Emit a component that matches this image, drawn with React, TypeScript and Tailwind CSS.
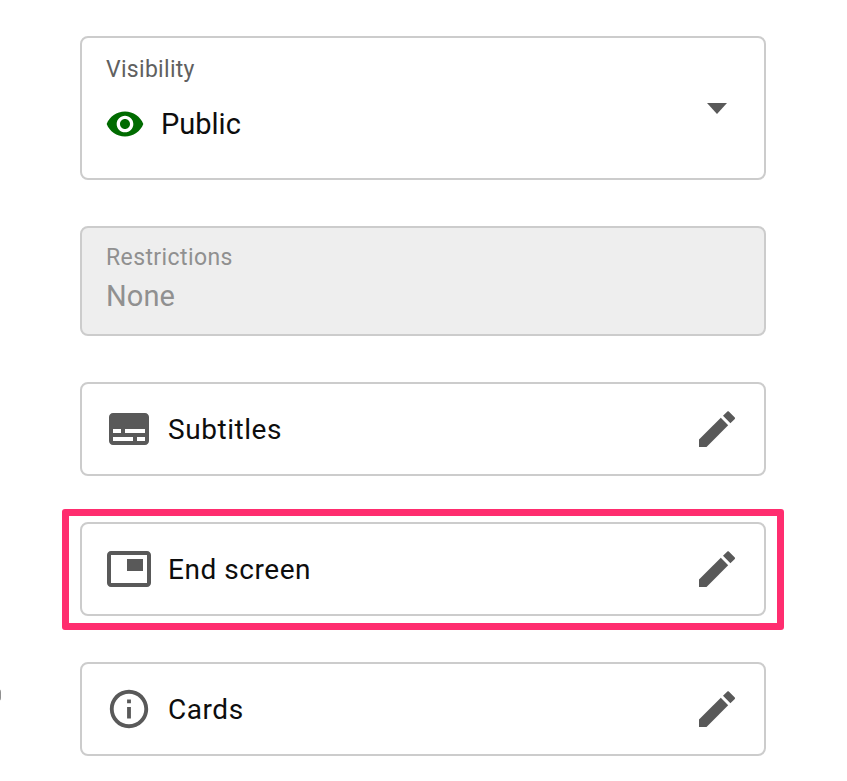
const rowIcons = {
  subtitles:
    "M20 4H4c-1.1 0-2 .9-2 2v12c0 1.1.9 2 2 2h16c1.1 0 2-.9 2-2V6c0-1.1-.9-2-2-2zM4 12h4v2H4v-2zm10 6H4v-2h10v2zm6 0h-4v-2h4v2zm0-4H10v-2h10v2z",
  endScreen:
    "M19 7h-8v6h8V7zm2-4H3c-1.1 0-2 .9-2 2v14c0 1.1.9 2 2 2h18c1.1 0 2-.9 2-2V5c0-1.1-.9-2-2-2zm0 16.01H3V4.98h18v14.03z",
  cards:
    "M11 7h2v2h-2zm0 4h2v6h-2zm1-9C6.48 2 2 6.48 2 12s4.48 10 10 10 10-4.48 10-10S17.52 2 12 2zm0 18c-4.41 0-8-3.59-8-8s3.59-8 8-8 8 3.59 8 8-3.59 8-8 8z",
};

function Pencil() {
  return (
    <svg viewBox="0 0 24 24" className="w-12 h-12 fill-[#595959] shrink-0">
      <path d="M3 17.25V21h3.75L17.6 10.1 13.9 6.4z" />
      <path d="M15 5.4l2.2-2.1c.2-.2.5-.2.7 0l3 3c.2.2.2.5 0 .7L18.7 9.1z" />
    </svg>
  );
}

function EditRow({
  icon,
  label,
  highlighted,
  iconClass = "w-12 h-12",
}: {
  icon: string;
  label: string;
  highlighted?: boolean;
  iconClass?: string;
}) {
  return (
    <div className="relative h-[94px] rounded-lg border-2 border-[#cccccc] flex items-center pl-[23px] pr-[23px]">
      {/* Pink callout round the row */}
      {highlighted && (
        <div className="absolute -left-[20px] -right-[20px] -top-[15px] -bottom-[16px] border-[7px] border-[#ff2d6f] rounded-[3px]" />
      )}
      <svg viewBox="0 0 24 24" className={`${iconClass} fill-[#595959] shrink-0`}>
        <path d={icon} />
      </svg>
      <span className="ml-[15px] pt-[2px] flex-1 text-[28px] tracking-[0.55px] text-[#0d0d0d]">{label}</span>
      <Pencil />
    </div>
  );
}

export default function App() {
  return (
    <main className="relative w-[847px] h-[781px] overflow-hidden bg-white font-['Roboto',sans-serif]">
      <div className="absolute -left-[5px] top-[689px] w-[6px] h-[12px] rounded-full bg-[#909090]" />
      <div className="flex flex-col gap-[46px] pt-[36px] pl-[80px] w-[766px]">
        <div className="relative h-[144px] rounded-lg border-2 border-[#cccccc] pl-[24px] pt-[17px]">
          <div className="text-[23px] leading-[30px] tracking-[0.3px] text-[#606060]">Visibility</div>
          <div className="flex items-center mt-[19px]">
            <svg viewBox="0 0 24 24" className="w-10 h-10 fill-[#006b00] shrink-0 -ml-[1px]">
              <path d="M12 4.5C7 4.5 2.73 7.61 1 12c1.73 4.39 6 7.5 11 7.5s9.27-3.11 11-7.5c-1.73-4.39-6-7.5-11-7.5zM12 17c-2.76 0-5-2.24-5-5s2.24-5 5-5 5 2.24 5 5-2.24 5-5 5zm0-8c-1.66 0-3 1.34-3 3s1.34 3 3 3 3-1.34 3-3-1.34-3-3-3z" />
            </svg>
            <span className="ml-[16px] text-[29px] leading-[40px] text-[#0d0d0d]">Public</span>
          </div>
          <div className="absolute right-[37px] top-[65px] w-0 h-0 border-x-[10px] border-x-transparent border-t-[11px] border-t-[#595959]" />
        </div>

        <div className="h-[110px] rounded-lg border-2 border-[#cccccc] bg-[#eeeeee] pl-[24px] pt-[15px]">
          <div className="text-[23px] leading-[30px] tracking-[0.4px] text-[#909090]">Restrictions</div>
          <div className="mt-[3px] text-[29px] leading-[40px] tracking-[0.1px] text-[#909090]">None</div>
        </div>

        <EditRow icon={rowIcons.subtitles} label="Subtitles" />
        <EditRow icon={rowIcons.endScreen} label="End screen" highlighted />
        <EditRow icon={rowIcons.cards} label="Cards" iconClass="w-[46px] h-[46px] mx-px" />
      </div>
    </main>
  );
}
